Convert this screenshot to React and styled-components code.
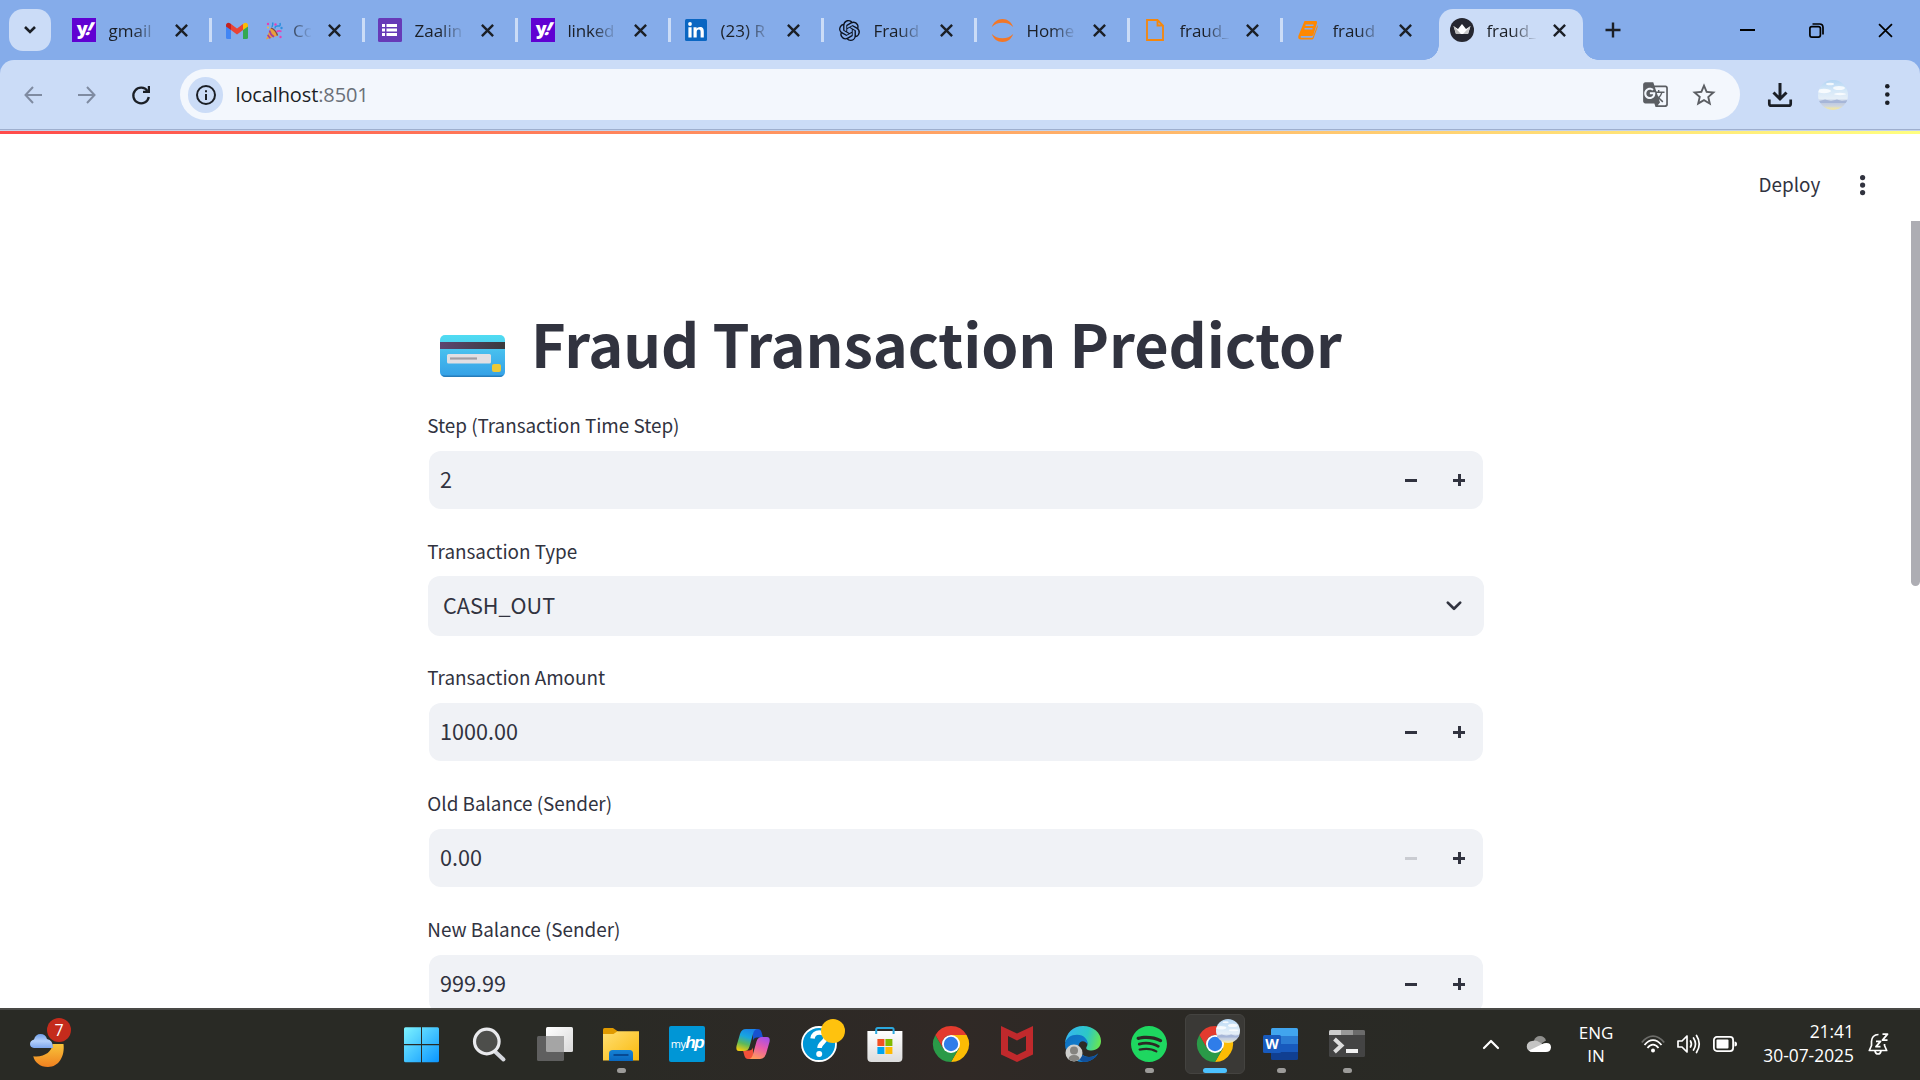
import React from "react";
import styled, { createGlobalStyle, css } from "styled-components";
import { MdGTranslate, MdStarBorder } from "react-icons/md";
import { SiOpenai, SiSpotify } from "react-icons/si";

const uiFont = `"Open Sans", "Noto Sans", sans-serif`;
const pageFont = `"Noto Sans CJK SC", "Noto Sans", sans-serif`;

const GlobalStyle = createGlobalStyle`
  * { box-sizing: border-box; }
  body { margin: 0; background: #fff; overflow: hidden; }
  svg { display: block; overflow: visible; flex: none; }
`;

const Screen = styled.div`
  width: 1920px;
  height: 1080px;
  display: flex;
  flex-direction: column;
  overflow: hidden;
  background: #fff;
`;

/* ---------- Browser chrome ---------- */

const Chrome = styled.header`
  background: #85acea;
  flex: none;
`;

const TabStrip = styled.div`
  height: 60px;
  display: flex;
  align-items: center;
  padding-left: 9px;
`;

const TabSearch = styled.button`
  width: 42px;
  height: 42px;
  border: 0;
  padding: 0;
  border-radius: 14px;
  background: #cbdcf7;
  display: grid;
  place-items: center;
  margin-right: 8px;
`;

const Tab = styled.div`
  width: 153px;
  height: 60px;
  padding-left: 13px;
  display: flex;
  align-items: center;
  flex: none;
  border-radius: 14px 14px 0 0;
  ${(p) =>
    p.$active &&
    css`
      position: relative;
      width: 144px;
      height: 51px;
      margin: 0 0 0 3px;
      padding-left: 11px;
      align-self: flex-end;
      padding-bottom: 9px;
      background: #cbdcf7;
      &::before,
      &::after {
        content: "";
        position: absolute;
        bottom: 0;
        width: 15px;
        height: 15px;
      }
      &::before {
        left: -15px;
        background: radial-gradient(circle at 0 0, transparent 14.5px, #cbdcf7 15px);
      }
      &::after {
        right: -15px;
        background: radial-gradient(circle at 100% 0, transparent 14.5px, #cbdcf7 15px);
      }
    `}
`;

const Favicon = styled.span`
  width: 24px;
  height: 24px;
  display: grid;
  place-items: center;
  flex: none;
`;

const TabTitle = styled.span`
  display: flex;
  align-items: center;
  gap: 10px;
  margin-left: 12.5px;
  width: 49px;
  height: 28px;
  padding-left: ${(p) => p.$indent || 0}px;
  overflow: hidden;
  white-space: nowrap;
  font: 17px/28px ${uiFont};
  letter-spacing: ${(p) => p.$track || 0}px;
  color: #1b1f26;
  padding-top: 2px;
  mask-image: linear-gradient(90deg, #000 24px, transparent 50px);
`;

const CloseTab = styled.span`
  width: 13px;
  height: 13px;
  margin-left: 17.5px;
`;

const Separator = styled.i`
  width: 3px;
  height: 24px;
  margin-left: auto;
  background: #cbdcf7;
`;

const NewTab = styled.span`
  margin-left: 22px;
`;

const WindowButtons = styled.div`
  display: flex;
  align-items: center;
  gap: 54px;
  margin-left: auto;
  padding-right: 27px;
`;

const Toolbar = styled.div`
  height: 71px;
  display: flex;
  align-items: center;
  padding: 0 0 2px 24px;
  background: #cbdcf7;
  border-radius: 14px 14px 0 0;
  box-shadow: inset 0 -1px #c5d3eb, inset 0 -2px #9fafce;
`;

const NavButtons = styled.div`
  display: flex;
  align-items: center;
  gap: 36px;
  width: 156px;
`;

const AddressBar = styled.div`
  width: 1560px;
  height: 51px;
  border-radius: 26px;
  background: #f3f7fd;
  display: flex;
  align-items: center;
  padding: 0 22px 0 8px;
`;

const SiteInfo = styled.span`
  width: 35px;
  height: 36px;
  border-radius: 18px;
  background: #cbdcf7;
  display: grid;
  place-items: center;
`;

const Url = styled.span`
  margin-left: 12.5px;
  font: 20px/30px ${uiFont};
  letter-spacing: -0.12px;
  color: #1b1f26;
  span { color: #6a7078; }
`;

const AddressActions = styled.span`
  margin-left: auto;
  display: flex;
  align-items: center;
  gap: 21px;
  color: #5b5e63;
`;

const ToolbarActions = styled.div`
  display: flex;
  align-items: center;
  margin-left: 28px;
  gap: 26px;
`;

/* ---------- App page ---------- */

const Page = styled.main`
  flex: 1;
  min-height: 0;
  overflow: hidden;
  display: flex;
  background: #fff;
  border-top: 3px solid transparent;
  border-image: linear-gradient(90deg, #ff4b4b, #ffff80) 1;
  border-width: 3px 0 0;
  font-family: ${pageFont};
  color: #31333f;
`;

const PageBody = styled.div`
  flex: 1;
  display: flex;
  flex-direction: column;
`;

const PageHeader = styled.div`
  height: 102px;
  display: flex;
  align-items: center;
  justify-content: flex-end;
  gap: 40px;
  padding-right: 45.5px;
  flex: none;
`;

const Deploy = styled.span`
  font-size: 18.9px;
  line-height: 28px;
  padding-bottom: 3px;
`;

const Content = styled.section`
  width: 1056px;
  margin-left: 428px;
  padding-top: 58px;
`;

const Heading = styled.div`
  display: flex;
  align-items: flex-start;
  height: 114px;
  padding-left: 12px;
`;

const CardEmoji = styled.svg`
  margin-top: 41px;
`;

const Title = styled.h1`
  margin: 0 0 0 26px;
  font-size: 59.4px;
  line-height: 97px;
  font-weight: 700;
  letter-spacing: -0.1px;
  white-space: nowrap;
`;

const Field = styled.div`
  height: 126px;
`;

const Label = styled.label`
  display: block;
  height: 42px;
  margin-left: -0.7px;
  font-size: 18.9px;
  line-height: 33px;
  letter-spacing: -0.03px;
`;

const Control = styled.div`
  height: ${(p) => (p.$select ? 60 : 58)}px;
  margin: ${(p) => (p.$select ? 0 : 1)}px;
  padding: 0 ${(p) => (p.$select ? "22.5px 2px 15px" : "18px 2px 11px")};
  border-radius: 12px;
  background: #f0f2f6;
  display: flex;
  align-items: center;
  justify-content: space-between;
  font-size: 21.6px;
  line-height: 32px;
`;

const SelectArrow = styled.svg`
  margin-top: 2px;
`;

const Stepper = styled.span`
  display: flex;
  align-items: center;
  gap: 36px;
  padding-top: 2px;
`;

const StepIcon = styled.i`
  width: 12px;
  height: 12px;
  opacity: ${(p) => (p.$disabled ? 0.2 : 1)};
  background:
    linear-gradient(#31333f, #31333f) center / 12px 3px no-repeat
    ${(p) => p.$plus && css`, linear-gradient(#31333f, #31333f) center / 3px 12px no-repeat`};
`;

const Scrollbar = styled.div`
  width: 9px;
  height: 365px;
  margin-top: 87px;
  border-radius: 0 0 5px 5px;
  background: #adadb3;
`;

/* ---------- Taskbar ---------- */

const Taskbar = styled.footer`
  height: 72px;
  flex: none;
  display: flex;
  align-items: center;
  background: linear-gradient(90deg, #292a25 0, #292a25 30%, #302926 50%, #2b2925 62%, #292a25 75%);
  box-shadow: inset 0 2px #494946;
  font-family: ${uiFont};
  color: #fff;
`;

const Widgets = styled.div`
  position: relative;
  width: 390px;
  height: 72px;
  padding: 26px 0 0 30px;
`;

const CountBadge = styled.span`
  position: absolute;
  left: 47px;
  top: 10px;
  width: 24px;
  height: 24px;
  border-radius: 50%;
  background: #c42b1c;
  text-align: center;
  font: 16px/24px ${uiFont};
`;

const Apps = styled.div`
  display: flex;
`;

const AppSlot = styled.div`
  position: relative;
  width: 66px;
  height: 72px;
  display: grid;
  place-items: center;
  ${(p) =>
    p.$active &&
    css`
      &::before {
        content: "";
        position: absolute;
        inset: 6px 3px;
        border: 1px solid #444340;
        border-radius: 6px;
        background: #3a3936;
      }
    `}
  ${(p) =>
    (p.$running || p.$active) &&
    css`
      &::after {
        content: "";
        position: absolute;
        bottom: 7px;
        left: ${p.$active ? 21 : 28.5}px;
        width: ${p.$active ? 24 : 9}px;
        height: 5px;
        border-radius: 3px;
        background: ${p.$active ? "#4cc2ff" : "#9c9b99"};
      }
    `}
  > svg, > div { position: relative; }
`;

const MyHp = styled.div`
  width: 36px;
  height: 36px;
  border-radius: 2px;
  background: #0096d6;
  font: 11px/36px ${uiFont};
  letter-spacing: -0.6px;
  text-align: center;
  b {
    font: italic 700 17px/34px "Liberation Sans Narrow", "Liberation Sans", sans-serif;
    letter-spacing: -1.5px;
  }
`;

const Tray = styled.div`
  display: flex;
  align-items: center;
  margin-left: auto;
  padding-right: 30px;
  font-size: 17px;
  line-height: 23px;
`;

const TrayIcons = styled.span`
  display: flex;
  align-items: center;
  gap: 12px;
  margin: 0 25px 0 28px;
`;

const Language = styled.span`
  width: 34px;
  margin-left: 28px;
  text-align: center;
  display: flex;
  flex-direction: column;
  align-items: center;
  padding-bottom: 1px;
`;

const Clock = styled.span`
  display: flex;
  flex-direction: column;
  align-items: flex-end;
  width: 92px;
  font-size: 17.4px;
  line-height: 24px;
  margin-right: 14px;
  padding-bottom: 2px;
  white-space: nowrap;
`;

/* ---------- Icons ---------- */

const Cross = ({ size = 13, width = 2.4, color = "#1b1f26" }) => (
  <svg width={size} height={size} viewBox="0 0 13 13">
    <path d="M.9.9l11.2 11.2M12.1.9L.9 12.1" stroke={color} strokeWidth={width} />
  </svg>
);

const YahooTile = styled.b`
  width: 24px;
  height: 24px;
  background: #6001d2;
  color: #fff;
  font: 800 18px/21px "Open Sans", sans-serif;
  letter-spacing: -1px;
  text-align: center;
  i { display: inline-block; transform: skewX(-16deg); }
`;

const Yahoo = () => <YahooTile>y<i>!</i></YahooTile>;

const Gmail = () => (
  <svg width="22" height="17" viewBox="0 0 22 17">
    <path d="M0 3v12.500q0 1.500 1.500 1.500H5V7z" fill="#4285f4" />
    <path d="M17 7v10h3.500q1.500 0 1.500-1.500V3z" fill="#34a853" />
    <path d="M5 2l6 4.500L17 2v6l-6 4.500L5 8z" fill="#ea4335" />
    <path d="M17 2l1-.8C19.600 0 22 .8 22 3.200V4.500L17 8z" fill="#fbbc04" />
    <path d="M5 2l-1-.8C2.400 0 0 .8 0 3.200V4.500L5 8z" fill="#c5221f" />
  </svg>
);

const Party = () => (
  <svg width="17" height="18" viewBox="0 0 17 18">
    <path d="M4.500 6L0 17.500L12 13.500C11 9.500 8 6.500 4.500 6z" fill="#e9a03b" />
    <path d="M3.500 8.500q1 4.500 4.500 6.300M1.800 12.800q1 2.500 2.600 3.400" stroke="#a53c9b" strokeWidth="1.600" fill="none" />
    <path d="M5 6q4.500 1.500 6.500 7.500" stroke="#7a4a4b" strokeWidth="1.300" fill="none" />
    <path d="M6 5q1.500-3 .5-4.500M9 6.500q0-3 3-2.500t2-3" stroke="#2e8fe0" strokeWidth="1.500" fill="none" />
    <path d="M10.500 10q2-2 5-.5" stroke="#e83fb4" strokeWidth="1.600" fill="none" />
    <g fill="#e83fb4"><circle cx="2" cy="2" r="1.200" /><circle cx="9.500" cy="2.500" r="1.200" /><circle cx="14.500" cy="15" r="1.200" /></g>
    <circle cx="15.500" cy="6" r="1.200" fill="#2e8fe0" />
    <circle cx="2" cy="5.500" r="1" fill="#f4b93f" />
  </svg>
);

const Forms = () => (
  <svg width="24" height="24" viewBox="0 0 24 24">
    <rect width="24" height="24" rx="1.500" fill="#673ab7" />
    <g fill="#fff">
      <path d="M4 6h3v3H4zM8.500 6H19v3H8.500zM4 10.500h3v3H4zM8.500 10.500H19v3H8.500zM4 15h3v3H4zM8.500 15H19v3H8.500z" />
    </g>
  </svg>
);

const LinkedIn = () => (
  <svg width="22" height="22" viewBox="0 0 22 22">
    <rect width="22" height="22" rx="1.500" fill="#0a66c2" />
    <circle cx="5" cy="5" r="1.900" fill="#fff" />
    <path d="M3.400 8.200h3.200V18.500H3.400zM8.500 8.200h3.100v1.500c.6-1 1.800-1.800 3.400-1.800 3 0 3.800 2 3.800 4.800v5.800h-3.200v-5.200c0-1.400-.2-2.700-1.800-2.700s-2.100 1.200-2.100 2.700v5.200H8.500z" fill="#fff" />
  </svg>
);

const Jupyter = () => (
  <svg width="23" height="23" viewBox="0 0 23 23">
    <path d="M.8 8C2.500 3 6.500 0 11.500 0s9 3 10.700 8C19.500 5.200 16 3.700 11.500 3.700S3.500 5.200.8 8z" fill="#f37726" />
    <path d="M.8 15c1.700 5 5.700 8 10.700 8s9-3 10.700-8c-2.700 2.800-6.200 4.300-10.700 4.300S3.500 17.800.8 15z" fill="#f37726" />
  </svg>
);

const FileIcon = () => (
  <svg width="18" height="22" viewBox="0 0 18 22">
    <path d="M1 1h10.500L17 6.500V21H1zM11.500 1v5.500H17" fill="none" stroke="#f5870c" strokeWidth="1.800" />
  </svg>
);

const Notebook = () => (
  <svg width="20" height="19" viewBox="0 0 20 19">
    <path d="M6.500 0H18q1.500 0 1 2L15.500 13.500q-.5 1.500-2 1.500H3.500c-1.200 0-1.200 1.700 0 1.700H14.500L19.500 4l.2 2-4 11q-.5 1.600-2 1.600H3Q-.3 18.500.3 15z" fill="#ff8800" />
    <path d="M7.500 4.200h8M6.500 7.700h8" stroke="#85acea" strokeWidth="1.400" />
  </svg>
);

const Streamlit = () => (
  <svg width="24" height="24" viewBox="0 0 24 24">
    <circle cx="12" cy="12" r="12" fill="#262730" />
    <path d="M3.500 8l4.500 3L12 6l4 5 4.500-3-2.500 8H6z" fill="#fff" />
    <path d="M3.500 8l2.500 8h5z" fill="#b9b9b9" />
    <path d="M20.500 8L18 16h-5z" fill="#c9c9c9" />
  </svg>
);

const Sky = ({ size = 30 }) => (
  <svg width={size} height={size} viewBox="0 0 30 30">
    <defs>
      <clipPath id={`sky${size}`}><circle cx="15" cy="15" r="15" /></clipPath>
      <linearGradient id={`skyg${size}`} x1="0" y1="0" x2="0" y2="1">
        <stop offset="0" stopColor="#b4d5f3" /><stop offset=".35" stopColor="#d5e8f8" />
        <stop offset=".62" stopColor="#e6eff8" /><stop offset=".72" stopColor="#b9c6e0" />
        <stop offset=".87" stopColor="#cdd5e0" /><stop offset=".94" stopColor="#ece5ae" /><stop offset="1" stopColor="#eee3a5" />
      </linearGradient>
    </defs>
    <g clipPath={`url(#sky${size})`}>
      <rect width="30" height="30" fill={`url(#skyg${size})`} />
      <g fill="#fff" opacity=".8">
        <ellipse cx="6" cy="11" rx="7" ry="2.200" /><ellipse cx="21" cy="8" rx="6" ry="2" />
        <ellipse cx="12" cy="4" rx="4" ry="1.300" /><ellipse cx="22" cy="14" rx="6" ry="1.200" />
      </g>
      <path d="M0 21.500l7-2 6 1.500 6-1.500 5 1.500 6-1v3H0z" fill="#a6b6d8" />
    </g>
  </svg>
);

const Dots = ({ gap, r, color }) => (
  <svg width={r * 2} height={gap * 2 + r * 2}>
    {[0, 1, 2].map((i) => <circle key={i} cx={r} cy={r + i * gap} r={r} fill={color} />)}
  </svg>
);

const ChromeLogo = () => (
  <svg width="36" height="36" viewBox="0 0 36 36">
    <path d="M18 9h15.590A18 18 0 0 1 18 36l7.800-13.500z" fill="#fbbc04" />
    <path d="M10.200 22.500L2.410 9A18 18 0 0 0 18 36l7.800-13.500z" fill="#2a9a48" />
    <path d="M2.410 9A18 18 0 0 1 33.590 9H18a9 9 0 0 0-7.800 13.500z" fill="#e33b2e" />
    <circle cx="18" cy="18" r="9" fill="#fff" />
    <circle cx="18" cy="18" r="7.200" fill="#2f7de9" />
  </svg>
);

const StartLogo = () => (
  <svg width="36" height="36" viewBox="0 0 36 36">
    <defs>
      <linearGradient id="win" x1="0" y1="0" x2="1" y2="1"><stop stopColor="#7df3ff" /><stop offset="1" stopColor="#0a95ff" /></linearGradient>
    </defs>
    <path transform="translate(-1 1.300)" d="M0 1.500Q0 0 1.500 0H17v16.700H0zM18 0h15.500Q35 0 35 1.500V16.700H18zM0 18h17v17H1.500Q0 35 0 33.500zM18 18h17v15.500q0 1.500-1.500 1.500H18z" fill="url(#win)" />
  </svg>
);

const SearchLogo = () => (
  <svg width="36" height="36" viewBox="0 0 36 36">
    <path d="M24.500 26l8 7.500" stroke="#d5d7dd" strokeWidth="4" strokeLinecap="round" />
    <circle cx="15.800" cy="15.500" r="12.300" fill="#4d4e4b" stroke="#e9eaed" strokeWidth="3.200" />
  </svg>
);

const TaskView = () => (
  <svg width="36" height="36" viewBox="0 0 36 36">
    <defs><linearGradient id="tv" x2="1" y2="1"><stop stopColor="#fff" /><stop offset="1" stopColor="#d9d9d9" /></linearGradient></defs>
    <rect x="9" y="1" width="27" height="25" rx="1.500" fill="url(#tv)" />
    <rect x="0" y="10" width="27" height="25" rx="1.500" fill="#5f5f5f" />
    <path d="M9 10h18v16H10.500Q9 26 9 24.500z" fill="#a5a5a5" />
  </svg>
);

const Explorer = () => (
  <svg width="36" height="36" viewBox="0 0 36 36">
    <defs>
      <linearGradient id="fo" x2="1" y2="1"><stop stopColor="#ffdf72" /><stop offset="1" stopColor="#fab90c" /></linearGradient>
      <linearGradient id="fb" x2="0" y2="1"><stop stopColor="#1583d5" /><stop offset="1" stopColor="#0a68bf" /></linearGradient>
    </defs>
    <path d="M0 3.500Q0 2 1.500 2H10l5 3.500V12H0z" fill="#e09a00" />
    <path d="M0 8h10.500l4-2.800H36V34.500H0z" fill="url(#fo)" />
    <path d="M6 35V27.500Q6 24 9.500 24h17q3.500 0 3.500 3.500V35z" fill="url(#fb)" />
    <path d="M10.500 29h15" stroke="#07468d" strokeWidth="1.800" />
  </svg>
);

const Copilot = () => (
  <svg width="36" height="36" viewBox="0 0 36 36">
    <defs>
      <linearGradient id="cpa" x1=".6" y1="0" x2=".3" y2="1"><stop stopColor="#1a84e8" /><stop offset=".35" stopColor="#18a5e0" /><stop offset=".68" stopColor="#5db95a" /><stop offset="1" stopColor="#eecb12" /></linearGradient>
      <linearGradient id="cpb" x1=".7" y1="0" x2=".3" y2="1"><stop stopColor="#a850e6" /><stop offset=".45" stopColor="#e85bab" /><stop offset="1" stopColor="#ff9a5a" /></linearGradient>
    </defs>
    <path d="M18 3h5q2.500 0 3.500 3l1.500 5.500h-6q-3 0-4 3z" fill="#1751ce" />
    <path d="M18 33h-5q-2.500 0-3.500-3L8 24.500h6q3 0 4-3z" fill="#f2503a" />
    <path d="M11 3h11q-3 .5-4 5l-3.500 12.500Q13.300 25 9 25H4Q.5 25 1.500 20L5 8Q6.500 3 11 3z" fill="url(#cpa)" />
    <path d="M25 33H14q3-.5 4-5l3.500-12.500Q22.700 11 27 11h5q3.500 0 2.500 5L31 28q-1.500 5-6 5z" fill="url(#cpb)" />
  </svg>
);

const Help = () => (
  <svg width="36" height="36" viewBox="0 0 36 36">
    <circle cx="18" cy="18" r="17" fill="#0096d6" stroke="#fff" strokeWidth="1.800" />
    <path d="M11.500 12.500C12 8.500 15 6.500 18.300 6.500c3.700 0 6.300 2.200 6.300 5.300 0 4.500-6.100 5-6.100 10.200" fill="none" stroke="#fff" strokeWidth="4.500" />
    <circle cx="18.200" cy="28" r="3" fill="#fff" />
    <circle cx="32" cy="5" r="12" fill="#ffc20e" />
  </svg>
);

const Store = () => (
  <svg width="36" height="36" viewBox="0 0 36 36">
    <defs><linearGradient id="st" x2="0" y2="1"><stop stopColor="#fff" /><stop offset="1" stopColor="#dcdcdc" /></linearGradient></defs>
    <g transform="translate(-.6 0)">
      <path d="M1 5h35v27q0 4-4 4H5q-4 0-4-4z" fill="url(#st)" />
      <path d="M9.800 8V3.500Q9.800 2 11.300 2h14.400q1.500 0 1.500 1.500V8" stroke="#2ba8de" strokeWidth="2" fill="none" />
      <path d="M11 13h7v7h-7z" fill="#f25022" /><path d="M19 13h7v7h-7z" fill="#7fba00" />
      <path d="M11 21h7v7h-7z" fill="#00a4ef" /><path d="M19 21h7v7h-7z" fill="#ffb900" />
    </g>
  </svg>
);

const McAfee = () => (
  <svg width="36" height="36" viewBox="0 0 36 36">
    <path d="M2 0l16 7.500L34 0v28.500L18 36 2 28.500zM9 10v14.500l9 4.500 9-4.500V10l-9 4.500z" fill="#c0292c" fillRule="evenodd" />
  </svg>
);

const Edge = () => (
  <svg width="36" height="36" viewBox="0 0 36 36">
    <defs>
      <linearGradient id="ed1" x1="0" y1=".3" x2="1" y2=".5"><stop stopColor="#35b6f2" /><stop offset=".6" stopColor="#2cc7c6" /><stop offset="1" stopColor="#66e555" /></linearGradient>
      <linearGradient id="ed2" x2="1" y2="1"><stop stopColor="#0f6fc0" /><stop offset="1" stopColor="#138ede" /></linearGradient>
    </defs>
    <path d="M0 17C1 7 8 0 18 0c10.500 0 18 7 18 15 0 6-4.500 9.500-9.500 9.500-4 0-6-1.500-5-3.500 3-4-1-10-8-11C8 9.500 2.500 12 0 17z" fill="url(#ed1)" />
    <path d="M0 18C1 12 6 8.800 12 8.800c7 0 11.500 5 10.500 10-1.500-4.500-8-5.500-9 1C12.500 26 18 31 24 31c4 0 6.500-1.500 9-3.500C30 33 24.500 36 18 36 8 36 0 28 0 18z" fill="url(#ed2)" />
    <path d="M13.500 19c-1 7.500 4.500 12 10.500 12 4 0 7-1.500 9.500-4-3.500 6-9 9-15.500 9-5-2-9-9-4.500-17z" fill="#104f9b" />
    <circle cx="9" cy="27" r="8.500" fill="#cfcfcd" />
    <circle cx="9" cy="24.500" r="4" fill="#85837f" />
    <path d="M3.500 33.500q0-4.500 5.500-4.500t5.500 4.500Q9 37 3.500 33.500z" fill="#85837f" />
  </svg>
);

const Word = () => (
  <svg width="36" height="36" viewBox="0 0 36 36">
    <path d="M8 3.500Q8 2 9.500 2h24Q35 2 35 3.500V10H8z" fill="#41a5ee" />
    <path d="M8 10h27v8H8z" fill="#2b7cd3" />
    <path d="M8 18h27v8H8z" fill="#185abd" />
    <path d="M8 26h27v6.500q0 1.500-1.500 1.500h-24Q8 34 8 32.500z" fill="#103f91" />
    <rect x="0" y="9" width="18" height="18" rx="1.500" fill="#185abd" />
    <text x="9" y="23" textAnchor="middle" fill="#fff" fontSize="14" fontWeight="700" fontFamily="Open Sans, sans-serif">W</text>
  </svg>
);

const Terminal = () => (
  <svg width="36" height="36" viewBox="0 0 36 36">
    <rect x="0" y="4" width="36" height="27" rx="1.500" fill="#444" />
    <path d="M0 5.500Q0 4 1.500 4H12v5H0z" fill="#ccc" /><path d="M12 4h12v5H12z" fill="#999" /><path d="M24 4h10.500Q36 4 36 5.500V9H24z" fill="#6b6b6b" />
    <path d="M5.500 13l7 6.500-7 6.500" fill="none" stroke="#ddd" strokeWidth="4" />
    <rect x="17" y="23" width="12" height="4" fill="#f2f2f2" />
  </svg>
);

const OneDrive = () => (
  <svg width="24" height="16" viewBox="0 0 24 16">
    <path d="M7 4.500Q8.500 0 13 0t6 4.500L12 9z" fill="#8f8f8d" />
    <path d="M5.500 16A5.500 5.500 0 0 1 5 5q4-1.500 7.500 1.200L18 9.500 6 16z" fill="#c4c4c3" />
    <path d="M2 14.500L17 7.300Q24 6 24 11.500 23.500 16 19 16H5.500Q3 16 2 14.500z" fill="#fff" />
  </svg>
);

const Wifi = () => (
  <svg width="24" height="18" viewBox="0 0 24 18" fill="none" stroke="#fff" strokeWidth="1.800">
    <path d="M.8 7.500Q6 1.200 12 1.200t11.200 6.300" stroke="#6c6c69" />
    <path d="M3.500 10Q7.500 5.200 12 5.200t8.500 4.800M6.500 13Q9 9.700 12 9.700t5.500 3.300" />
    <circle cx="12" cy="15.500" r="2" fill="#fff" stroke="none" />
  </svg>
);

const Speaker = () => (
  <svg width="24" height="20" viewBox="0 0 24 20" fill="none" stroke="#fff" strokeWidth="1.700" strokeLinejoin="round" strokeLinecap="round">
    <path d="M1 7h4l5-5v16l-5-5H1z" /><path d="M13.500 7q1.800 3 0 6M16.500 4q4 6 0 12M19.500 1.500q5.500 8.500 0 17" />
  </svg>
);

const Battery = () => (
  <svg width="24" height="16" viewBox="0 0 24 16">
    <rect x=".9" y=".9" width="19.200" height="14.200" rx="3" fill="none" stroke="#fff" strokeWidth="1.800" />
    <rect x="3.500" y="3.500" width="12" height="9" rx="1" fill="#fff" /><path d="M21.500 5.500Q24 5.500 24 8t-2.500 2.500z" fill="#fff" />
  </svg>
);

const Bell = () => (
  <svg width="22" height="22" viewBox="0 0 22 22" fill="none" stroke="#fff" strokeWidth="1.700" strokeLinejoin="round">
    <path d="M10.500 1.500C6 1.500 3.500 4.500 3.500 8.500v4L1.300 17.500h17.400l-2.200-5V11M7 18q.5 3 3 3t3-3" />
    <path d="M14.500 1.200h5l-5 6h5M8 8.300h4.500L8 13.700h4.500" strokeWidth="1.800" />
  </svg>
);

const Weather = () => (
  <svg width="36" height="34" viewBox="0 0 36 34">
    <defs>
      <linearGradient id="cl" x2="0" y2="1"><stop stopColor="#6f9fe8" /><stop offset=".5" stopColor="#b4d0fb" /><stop offset="1" stopColor="#7ea7ee" /></linearGradient>
      <linearGradient id="mo" x2="0" y2="1"><stop stopColor="#f8c53a" /><stop offset="1" stopColor="#f08020" /></linearGradient>
    </defs>
    <path d="M33.500 10C35 22 29 33 18 33 10 33 4.500 28 3.300 22.200 14 23.500 22 18 22.500 10z" fill="url(#mo)" />
    <path d="M4 14Q0 13.500 0 10t4-4.500Q5.500 0 10.500 0T17 5q6 1 6 9z" fill="url(#cl)" />
  </svg>
);

/* ---------- Data ---------- */

const tabs = [
  { title: "gmail", icon: <Yahoo /> },
  { title: "Co", icon: <Gmail />, emoji: true },
  { title: "Zaalin", icon: <Forms /> },
  { title: "linked", icon: <Yahoo />, track: -0.2 },
  { title: "(23) R", icon: <LinkedIn /> },
  { title: "Fraud", icon: <SiOpenai size={21} color="#0c1320" />, track: -0.1 },
  { title: "Home", icon: <Jupyter />, track: -0.1 },
  { title: "fraud_", icon: <FileIcon />, track: -0.1 },
  { title: "fraud", icon: <Notebook />, track: -0.1 },
  { title: "fraud_", icon: <Streamlit />, active: true, track: -0.1 },
];

const fields = [
  { label: "Step (Transaction Time Step)", value: "2" },
  { label: "Transaction Type", value: "CASH_OUT", select: true },
  { label: "Transaction Amount", value: "1000.00" },
  { label: "Old Balance (Sender)", value: "0.00", atMin: true },
  { label: "New Balance (Sender)", value: "999.99" },
];

const SkyBadge = styled.span`
  position: absolute;
  left: 34px;
  top: 11px;
`;

const apps = [
  { icon: <StartLogo /> },
  { icon: <SearchLogo /> },
  { icon: <TaskView /> },
  { icon: <Explorer />, running: true },
  { icon: <MyHp>my<b>hp</b></MyHp> },
  { icon: <Copilot /> },
  { icon: <Help /> },
  { icon: <Store /> },
  { icon: <ChromeLogo /> },
  { icon: <McAfee /> },
  { icon: <Edge /> },
  { icon: <SiSpotify size={36} color="#1ed760" />, running: true },
  { icon: <ChromeLogo />, active: true, badge: <SkyBadge><Sky size={24} /></SkyBadge> },
  { icon: <Word />, running: true },
  { icon: <Terminal />, running: true },
];

const MenuSlot = styled.span`
  margin-left: 10.5px;
`;

const CloudSlot = styled.span`
  margin-left: 28px;
`;

export default function App() {
  return (
    <Screen>
      <GlobalStyle />
      <Chrome>
        <TabStrip>
          <TabSearch>
            <svg width="12" height="8" viewBox="0 0 12 8"><path d="M1 1l5 5 5-5" fill="none" stroke="#1b1f26" strokeWidth="2.600" /></svg>
          </TabSearch>
          {tabs.map((t, i) => (
            <Tab key={i} $active={t.active}>
              <Favicon>{t.icon}</Favicon>
              <TabTitle $track={t.track} $indent={t.emoji ? 4.5 : 0}>
                {t.emoji && <Party />}
                {t.title}
              </TabTitle>
              <CloseTab><Cross /></CloseTab>
              {i < 8 && <Separator />}
            </Tab>
          ))}
          <NewTab>
            <svg width="16" height="16" viewBox="0 0 16 16"><path d="M8 .5v15M.5 8h15" stroke="#1b1f26" strokeWidth="2.400" /></svg>
          </NewTab>
          <WindowButtons>
            <svg width="15" height="15" viewBox="0 0 15 15"><path d="M0 7h15" stroke="#000" strokeWidth="2" /></svg>
            <svg width="15" height="15" viewBox="0 0 15 15" fill="none" stroke="#000" strokeWidth="1.700">
              <rect x=".9" y="3.600" width="10.500" height="10.500" rx="2" /><path d="M3.500 1h7Q14 1 14 4.500v7" />
            </svg>
            <Cross size={15} width={1.5} color="#000" />
          </WindowButtons>
        </TabStrip>
        <Toolbar>
          <NavButtons>
            <svg width="18" height="18" viewBox="0 0 18 18"><path d="M9 1L1.500 9 9 17M1.500 9H18" fill="none" stroke="#7f8ba1" strokeWidth="2" /></svg>
            <svg width="18" height="18" viewBox="0 0 18 18"><path d="M9 1l7.500 8L9 17M16.500 9H0" fill="none" stroke="#7f8ba1" strokeWidth="2" /></svg>
            <svg width="18" height="18" viewBox="0 0 18 18">
              <path d="M15.500 5A7.800 7.800 0 1 0 16.800 11" fill="none" stroke="#1b1f26" strokeWidth="2.300" />
              <path d="M18 0v7h-7V4.800h4.800V0z" fill="#1b1f26" />
            </svg>
          </NavButtons>
          <AddressBar>
            <SiteInfo>
              <svg width="20" height="20" viewBox="0 0 20 20">
                <circle cx="10" cy="10" r="9" fill="none" stroke="#1b1f26" strokeWidth="2" />
                <path d="M9 9h2v6H9zM9 5.200h2v2H9z" fill="#1b1f26" />
              </svg>
            </SiteInfo>
            <Url>localhost<span>:8501</span></Url>
            <AddressActions>
              <MdGTranslate size={27} />
              <MdStarBorder size={28} />
            </AddressActions>
          </AddressBar>
          <ToolbarActions>
            <svg width="24" height="24" viewBox="0 0 24 24" fill="none" stroke="#1b1f26">
              <path d="M12 0v15.500M5.500 9.500L12 16l6.500-6.500" strokeWidth="3" /><path d="M1.300 16.500v4.200q0 2 2 2h17.400q2 0 2-2v-4.200" strokeWidth="2.700" />
            </svg>
            <Sky />
            <MenuSlot><Dots gap={8.2} r={2.3} color="#1b1f26" /></MenuSlot>
          </ToolbarActions>
        </Toolbar>
      </Chrome>

      <Page>
        <PageBody>
          <PageHeader>
            <Deploy>Deploy</Deploy>
            <Dots gap={7.5} r={2.6} color="#31333f" />
          </PageHeader>
          <Content>
            <Heading>
              <CardEmoji width="65" height="42" viewBox="0 0 65 42">
                <defs>
                  <linearGradient id="card" x2="0" y2="1"><stop stopColor="#50dcf2" /><stop offset=".2" stopColor="#4fd2f0" /><stop offset=".4" stopColor="#46bdee" /><stop offset="1" stopColor="#35a0e6" /></linearGradient>
                  <linearGradient id="stripe"><stop stopColor="#5d4470" /><stop offset="1" stopColor="#3a3a3c" /></linearGradient>
                </defs>
                <rect width="65" height="42" rx="5" fill="url(#card)" />
                <path d="M1.500 39.500q1 2.500 3.500 2.500h55q2.500 0 3.500-2.500-1 1-3.500 1H5q-2.500 0-3.500-1z" fill="#267cba" />
                <path d="M0 7h65v7H0z" fill="url(#stripe)" />
                <rect x="7" y="19" width="44" height="9.500" rx="1.500" fill="#e0dfe3" />
                <path d="M10 23.500h27" stroke="#a09da3" strokeWidth="2.200" />
                <rect x="52" y="29" width="9" height="8" rx="2" fill="#ecc936" />
              </CardEmoji>
              <Title>Fraud Transaction Predictor</Title>
            </Heading>
            {fields.map((f) => (
              <Field key={f.label}>
                <Label>{f.label}</Label>
                <Control $select={f.select}>
                  <span>{f.value}</span>
                  {f.select ? (
                    <SelectArrow width="16" height="10" viewBox="0 0 16 10"><path d="M1.800 1.600l6.200 6.200 6.200-6.200" fill="none" stroke="#31333f" strokeWidth="2.700" strokeLinecap="round" strokeLinejoin="round" /></SelectArrow>
                  ) : (
                    <Stepper>
                      <StepIcon $disabled={f.atMin} />
                      <StepIcon $plus />
                    </Stepper>
                  )}
                </Control>
              </Field>
            ))}
          </Content>
        </PageBody>
        <Scrollbar />
      </Page>

      <Taskbar>
        <Widgets>
          <Weather />
          <CountBadge>7</CountBadge>
        </Widgets>
        <Apps>
          {apps.map((a, i) => (
            <AppSlot key={i} $active={a.active} $running={a.running}>
              {a.icon}
              {a.badge}
            </AppSlot>
          ))}
        </Apps>
        <Tray>
          <svg width="16" height="10" viewBox="0 0 16 10"><path d="M1 9l7-7 7 7" fill="none" stroke="#fff" strokeWidth="2.200" strokeLinecap="round" strokeLinejoin="round" /></svg>
          <CloudSlot><OneDrive /></CloudSlot>
          <Language><span>ENG</span><span>IN</span></Language>
          <TrayIcons><Wifi /><Speaker /><Battery /></TrayIcons>
          <Clock><span>21:41</span><span>30-07-2025</span></Clock>
          <Bell />
        </Tray>
      </Taskbar>
    </Screen>
  );
}
